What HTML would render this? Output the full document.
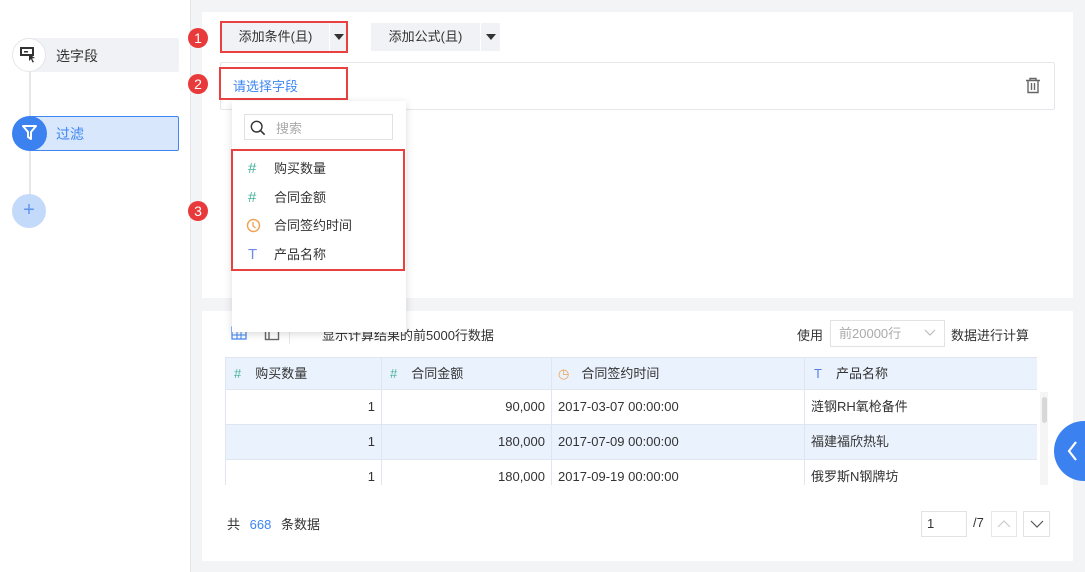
<!DOCTYPE html>
<html><head><meta charset="utf-8"><style>
*{box-sizing:border-box;margin:0;padding:0}
body{width:1085px;height:572px;overflow:hidden;background:#f3f4f6;font-family:"Liberation Sans","Noto Sans CJK SC",sans-serif;font-size:13px;color:#333;position:relative}
.abs{position:absolute}
.side{left:0;top:0;width:191px;height:572px;background:#fff;border-right:1px solid #e3e5e8}
.badge{width:20px;height:20px;border-radius:50%;background:#e83a3a;color:#fff;font-size:14px;text-align:center;line-height:20px}
.red{border:2px solid #e94040}
.th{position:absolute;top:0;height:33px;line-height:33px;border-right:1px solid #dfe6ef}
.td{position:absolute;height:34px;line-height:34px;border-right:1px solid #dfe6ef;padding:0 6px}
</style></head><body>
<div class="abs side">
  <div class="abs" style="left:29px;top:55px;width:2px;height:170px;background:#e4e6ea"></div>
  <div class="abs" style="left:28px;top:38px;width:151px;height:34px;background:#f1f2f5;border-radius:2px"></div>
  <div class="abs" style="left:12px;top:38px;width:34px;height:34px;border-radius:50%;background:#fff;border:1px solid #e4e6ea"></div>
  <svg class="abs" style="left:20px;top:47px" width="18" height="16" viewBox="0 0 18 16"><rect x="1" y="1" width="12" height="7" fill="none" stroke="#333" stroke-width="2"/><rect x="4" y="4" width="4" height="1.5" fill="#333"/><path d="M9 7 L15 11 L12 11.5 L14 15 L12.5 15.5 L11 12 L9 14Z" fill="#333"/></svg>
  <div class="abs" style="left:56px;top:46px;font-size:14px">选字段</div>
  <div class="abs" style="left:28px;top:116px;width:151px;height:35px;background:#d8e7fc;border:1px solid #3d86f3;border-radius:2px"></div>
  <div class="abs" style="left:12px;top:116px;width:35px;height:35px;border-radius:50%;background:#3b82f0"></div>
  <svg class="abs" style="left:21px;top:124px" width="17" height="18" viewBox="0 0 17 18"><path d="M2 2 H15 L10 8 V15 L7 13 V8 Z" fill="none" stroke="#fff" stroke-width="2" stroke-linejoin="round"/></svg>
  <div class="abs" style="left:56px;top:124px;font-size:14px;color:#3d86f3">过滤</div>
  <div class="abs" style="left:12px;top:194px;width:34px;height:34px;border-radius:50%;background:#c4dafa;color:#5e95ee;text-align:center;line-height:32px;font-size:20px">+</div>
</div>

<div class="abs" style="left:202px;top:12px;width:871px;height:286px;background:#fff"></div>
<div class="abs badge" style="left:188px;top:28px">1</div>
<div class="abs badge" style="left:188px;top:74px">2</div>
<div class="abs badge" style="left:188px;top:201px">3</div>
<div class="abs" style="left:222px;top:23px;width:107px;height:28px;background:#f1f2f5;text-align:center;line-height:28px">添加条件(且)</div>
<div class="abs" style="left:330px;top:23px;width:17px;height:28px;background:#f1f2f5"></div>
<div class="abs" style="left:334px;top:34px;border:5px solid transparent;border-top:6px solid #333"></div>
<div class="abs red" style="left:220px;top:21px;width:128px;height:32px"></div>
<div class="abs" style="left:371px;top:23px;width:109px;height:28px;background:#f1f2f5;text-align:center;line-height:28px">添加公式(且)</div>
<div class="abs" style="left:481px;top:23px;width:19px;height:28px;background:#f1f2f5"></div>
<div class="abs" style="left:486px;top:34px;border:5px solid transparent;border-top:6px solid #333"></div>
<div class="abs" style="left:220px;top:62px;width:835px;height:48px;border:1px solid #e6e7ea;border-radius:2px"></div>
<div class="abs red" style="left:219px;top:67px;width:129px;height:33px"></div>
<div class="abs" style="left:233px;top:76px;color:#3d86f3">请选择字段</div>
<svg class="abs" style="left:1025px;top:77px" width="16" height="17" viewBox="0 0 16 17"><path d="M1 3.5 H15 M5 3.5 V1.5 H11 V3.5 M3 3.5 V15.5 H13 V3.5 M6.5 6 V13 M9.5 6 V13" fill="none" stroke="#666" stroke-width="1.4"/></svg>

<div class="abs" style="left:202px;top:311px;width:871px;height:250px;background:#fff"></div>
<svg class="abs" style="left:231px;top:326px" width="16" height="14" viewBox="0 0 16 14"><rect x="1" y="1" width="14" height="12" fill="none" stroke="#3d86f3" stroke-width="1.2"/><path d="M1 5H15M1 9H15M6 1V13M10 1V13" stroke="#3d86f3" stroke-width="1"/></svg>
<svg class="abs" style="left:264px;top:325px" width="16" height="16" viewBox="0 0 16 16"><rect x="1.5" y="1.5" width="13" height="13" fill="none" stroke="#666" stroke-width="1.4"/><path d="M5 1.5V14.5" stroke="#666" stroke-width="1.4"/></svg>
<div class="abs" style="left:289px;top:322px;width:1px;height:22px;background:#e6e7ea"></div>
<div class="abs" style="left:322px;top:325px">显示计算结果的前5000行数据</div>
<div class="abs" style="left:797px;top:325px">使用</div>
<div class="abs" style="left:830px;top:320px;width:115px;height:27px;border:1px solid #e0e2e6;color:#aaa;line-height:25px;padding-left:8px">前20000行</div>
<svg class="abs" style="left:924px;top:329px" width="12" height="8" viewBox="0 0 12 8"><path d="M1 1L6 6L11 1" fill="none" stroke="#bbb" stroke-width="1.2"/></svg>
<div class="abs" style="left:951px;top:325px">数据进行计算</div>

<div class="abs" style="left:225px;top:357px;width:812px;height:128px;overflow:hidden;border-left:1px solid #dfe6ef">
  <div class="abs" style="left:0;top:0;width:812px;height:33px;background:#eaf2fd;border-top:1px solid #dfe6ef;border-bottom:1px solid #dfe6ef"></div>
  <div class="th" style="left:0;width:156px"><span style="color:#47b29b;margin:0 14px 0 8px">#</span>购买数量</div>
  <div class="th" style="left:156px;width:170px"><span style="color:#47b29b;margin:0 14px 0 8px">#</span>合同金额</div>
  <div class="th" style="left:326px;width:253px"><span style="color:#f0a050;margin:0 12px 0 6px">◷</span>合同签约时间</div>
  <div class="th" style="left:579px;width:233px"><span style="color:#5b7fe0;margin:0 14px 0 9px">T</span>产品名称</div>
  <div class="abs" style="left:0;top:33px;width:812px;height:35px;background:#fff;border-bottom:1px solid #dfe6ef"></div>
  <div class="abs" style="left:0;top:68px;width:812px;height:35px;background:#eaf2fd;border-bottom:1px solid #dfe6ef"></div>
  <div class="abs" style="left:0;top:103px;width:812px;height:35px;background:#fff"></div>
  <div class="td" style="left:0;top:33px;width:156px;text-align:right">1</div>
  <div class="td" style="left:156px;top:33px;width:170px;text-align:right">90,000</div>
  <div class="td" style="left:326px;top:33px;width:253px">2017-03-07 00:00:00</div>
  <div class="td" style="left:579px;top:33px;width:233px">涟钢RH氧枪备件</div>
  <div class="td" style="left:0;top:68px;width:156px;text-align:right">1</div>
  <div class="td" style="left:156px;top:68px;width:170px;text-align:right">180,000</div>
  <div class="td" style="left:326px;top:68px;width:253px">2017-07-09 00:00:00</div>
  <div class="td" style="left:579px;top:68px;width:233px">福建福欣热轧</div>
  <div class="td" style="left:0;top:103px;width:156px;text-align:right">1</div>
  <div class="td" style="left:156px;top:103px;width:170px;text-align:right">180,000</div>
  <div class="td" style="left:326px;top:103px;width:253px">2017-09-19 00:00:00</div>
  <div class="td" style="left:579px;top:103px;width:233px">俄罗斯N钢牌坊</div>
</div>
<div class="abs" style="left:1040px;top:392px;width:8px;height:93px;background:#f5f5f5"></div>
<div class="abs" style="left:1042px;top:397px;width:5px;height:26px;background:#d8d8d8;border-radius:3px"></div>

<div class="abs" style="left:227px;top:514px">共 <span style="color:#3d86f3;margin:0 6px">668</span> 条数据</div>
<div class="abs" style="left:921px;top:511px;width:46px;height:26px;border:1px solid #e0e2e6;line-height:24px;padding-left:5px">1</div>
<div class="abs" style="left:973px;top:515px">/7</div>
<div class="abs" style="left:991px;top:511px;width:26px;height:26px;border:1px solid #e6e7ea"></div>
<svg class="abs" style="left:997px;top:520px" width="14" height="8" viewBox="0 0 14 8"><path d="M1 7L7 1L13 7" fill="none" stroke="#ccc" stroke-width="1.2"/></svg>
<div class="abs" style="left:1023px;top:511px;width:27px;height:26px;border:1px solid #e0e2e6"></div>
<svg class="abs" style="left:1030px;top:520px" width="14" height="8" viewBox="0 0 14 8"><path d="M1 1L7 7L13 1" fill="none" stroke="#555" stroke-width="1.2"/></svg>

<div class="abs" style="left:1054px;top:421px;width:60px;height:60px;border-radius:50%;background:#3b82f0"></div>
<svg class="abs" style="left:1066px;top:440px" width="12" height="22" viewBox="0 0 12 22"><path d="M10 2L3 11L10 20" fill="none" stroke="#fff" stroke-width="2.2"/></svg>

<div class="abs" style="left:232px;top:101px;width:174px;height:231px;background:#fff;box-shadow:0 2px 8px rgba(0,0,0,.15)">
  <div class="abs" style="left:12px;top:13px;width:149px;height:26px;border:1px solid #e0e2e6"></div>
  <svg class="abs" style="left:18px;top:19px" width="16" height="16" viewBox="0 0 18 18"><circle cx="7.5" cy="7.5" r="6" fill="none" stroke="#333" stroke-width="1.6"/><path d="M12 12L16.5 16.5" stroke="#333" stroke-width="1.8"/></svg>
  <div class="abs" style="left:44px;top:17px;color:#aaa">搜索</div>
  <div class="abs" style="left:16px;top:59px;color:#47b29b;font-size:15px">#</div><div class="abs" style="left:42px;top:57px">购买数量</div>
  <div class="abs" style="left:16px;top:88px;color:#47b29b;font-size:15px">#</div><div class="abs" style="left:42px;top:86px">合同金额</div>
  <svg class="abs" style="left:14px;top:117px" width="15" height="15" viewBox="0 0 15 15"><circle cx="7.5" cy="7.5" r="6" fill="none" stroke="#f0a050" stroke-width="1.4"/><path d="M7 4V8L9.5 10" fill="none" stroke="#f0a050" stroke-width="1.3"/></svg><div class="abs" style="left:42px;top:114px">合同签约时间</div>
  <div class="abs" style="left:16px;top:145px;color:#6e8ee6;font-size:15px">T</div><div class="abs" style="left:42px;top:143px">产品名称</div>
</div>
<div class="abs red" style="left:231px;top:149px;width:174px;height:122px"></div>
</body></html>
